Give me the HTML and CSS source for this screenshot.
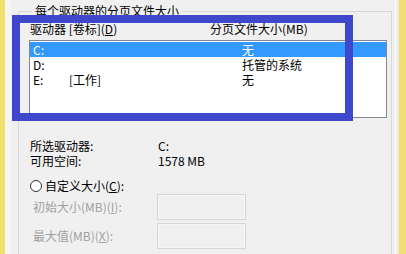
FILE: index.html
```html
<!DOCTYPE html>
<html lang="zh-CN">
<head>
<meta charset="utf-8">
<link rel="stylesheet" href="styles.css">
</head>
<body>
<div class="screen">
  <div class="edge-yellow"></div>
  <div class="edge-light"></div>
  <div class="panel">
    <fieldset class="group">
      <legend class="group-title">每个驱动器的分页文件大小</legend>
      <div class="list-header">
        <span>驱动器 [卷标](<u>D</u>)</span>
        <span>分页文件大小(MB)</span>
      </div>
      <div class="listbox">
        <div class="row selected"><span>C:</span><span></span><span>无</span></div>
        <div class="row"><span>D:</span><span></span><span>托管的系统</span></div>
        <div class="row"><span>E:</span><span>[工作]</span><span>无</span></div>
      </div>
      <div class="info">
        <span>所选驱动器:</span><span>C:</span>
        <span>可用空间:</span><span>1578 MB</span>
      </div>
      <div class="radio-row">
        <span class="radio"></span>
        <span>自定义大小(<u>C</u>):</span>
      </div>
      <div class="fields">
        <span class="disabled">初始大小(MB)(<u>I</u>):</span><span class="textbox"></span>
        <span class="disabled">最大值(MB)(<u>X</u>):</span><span class="textbox"></span>
      </div>
    </fieldset>
  </div>
  <div class="edge-right"></div>
  <div class="edge-yellow-r"></div>
</div>
<div class="annotation"></div>
</body>
</html>
```
FILE: styles.css
```css
html, body {
  margin: 0;
  padding: 0;
}
body {
  width: 406px;
  height: 254px;
  overflow: hidden;
  background: #f0f0f0;
  font-family: "Noto Sans CJK SC", "Noto Sans", sans-serif;
  font-size: 12px;
  color: #000;
  position: relative;
}
.screen {
  display: flex;
  height: 254px;
  overflow: hidden;
}
.edge-yellow {
  width: 5px;
  background: #f0e16e;
}
.edge-light {
  width: 6px;
  background: #f6f6f4;
}
.panel {
  width: 381px;
  height: 254px;
  box-sizing: border-box;
  padding-top: 3px;
  overflow: hidden;
}
.group {
  margin: 0 0 0 7px;
  padding: 0 4px 0 10px;
  border: 1px solid #d8d8d8;
  height: 270px;
  box-sizing: border-box;
  min-width: 0;
}
.group-title {
  margin-left: 3px;
  padding: 0 3px;
  line-height: 16px;
  height: 16px;
}
.list-header {
  display: grid;
  grid-template-columns: 180px 1fr;
  padding-left: 1px;
  margin-top: 2px;
  line-height: 16px;
  height: 16px;
}
.listbox {
  margin-top: 3px;
  height: 78px;
  box-sizing: border-box;
  border: 1px solid #828790;
  background: #fff;
  padding-top: 1px;
}
.row {
  display: grid;
  grid-template-columns: 36px 173px 1fr;
  padding-left: 3px;
  height: 15px;
  line-height: 15px;
  white-space: nowrap;
}
.row.selected {
  background: #3399ff;
  color: #fff;
}
.info {
  display: grid;
  grid-template-columns: 128px 1fr;
  padding-left: 1px;
  margin-top: 20px;
  line-height: 15px;
}
.radio-row {
  display: flex;
  align-items: center;
  gap: 3px;
  margin-top: 10px;
  height: 16px;
  line-height: 16px;
  padding-left: 1px;
}
.radio {
  width: 12px;
  height: 12px;
  box-sizing: border-box;
  border: 1px solid #333;
  border-radius: 50%;
  background: #fff;
}
.fields {
  display: grid;
  grid-template-columns: 128px 89px;
  row-gap: 3px;
  align-items: center;
}
.disabled {
  color: #a0a0a0;
  padding-left: 4px;
  line-height: 16px;
}
.textbox {
  height: 26px;
  box-sizing: border-box;
  border: 1px solid #d6d6d6;
  box-shadow: inset 0 0 0 1px #f7f7f7;
  background: #f0f0f0;
}
.edge-right {
  width: 7px;
  box-sizing: border-box;
  border-right: 1px solid #e6e6ee;
  background: linear-gradient(to right, #f0f0f0 0, #f0f0f0 3px, #fafafa 3px, #fafafa 4px, #f0f0f0 4px);
}
.edge-yellow-r {
  width: 7px;
  background: #f0e16e;
}
.annotation {
  position: absolute;
  left: 12px;
  top: 15px;
  width: 341px;
  height: 106px;
  box-sizing: border-box;
  border: 8px solid #3f48cc;
}
```
